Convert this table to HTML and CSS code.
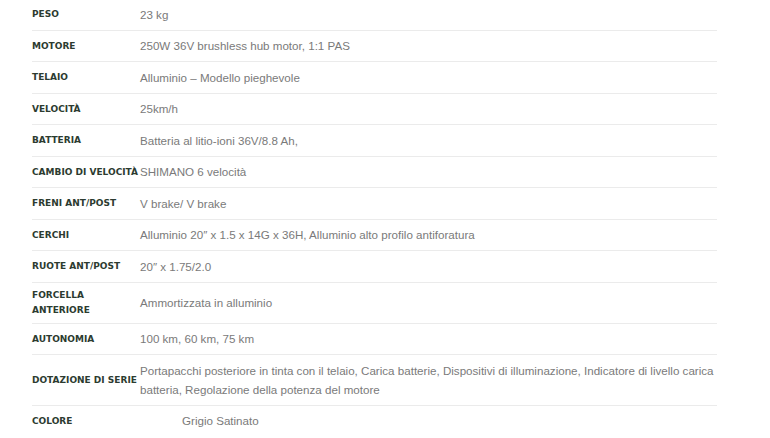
FILE: index.html
```html
<!DOCTYPE html>
<html lang="it">
<head>
  <meta charset="UTF-8" />
  <meta name="viewport" content="width=device-width, initial-scale=1.0"/>
  <title>Scheda tecnica</title>
  <link rel="stylesheet" href="styles.css">
</head>
<body>
  <table class="specs">
    <tr><th>Peso</th><td>23 kg</td></tr>
    <tr><th>Motore</th><td>250W 36V brushless hub motor, 1:1 PAS</td></tr>
    <tr><th>Telaio</th><td>Alluminio – Modello pieghevole</td></tr>
    <tr><th>Velocità</th><td>25km/h</td></tr>
    <tr><th>Batteria</th><td>Batteria al litio-ioni 36V/8.8 Ah,</td></tr>
    <tr><th>Cambio di velocità</th><td>SHIMANO 6 velocità</td></tr>
    <tr><th>Freni ant/post</th><td>V brake/ V brake</td></tr>
    <tr><th>Cerchi</th><td>Alluminio 20″ x 1.5 x 14G x 36H, Alluminio alto profilo antiforatura</td></tr>
    <tr><th>Ruote ant/post</th><td>20″ x 1.75/2.0</td></tr>
    <tr><th>Forcella anteriore</th><td>Ammortizzata in alluminio</td></tr>
    <tr><th>Autonomia</th><td>100 km, 60 km, 75 km</td></tr>
    <tr><th>Dotazione di serie</th><td>Portapacchi posteriore in tinta con il telaio, Carica batterie, Dispositivi di illuminazione, Indicatore di livello carica batteria, Regolazione della potenza del motore</td></tr>
    <tr><th>Colore</th><td><span class="indent">Grigio Satinato</span></td></tr>
  </table>
</body>
</html>
```

FILE: styles.css
```css
:root {
  --label: #2c3b30;
  --testo: #7a7a7a;
  --linea: #ebebeb;
}

* {
  box-sizing: border-box;
}

body {
  margin: 0;
  background-color: #fff;
}

.specs {
  margin: -1px 0 0 32px;
  width: 685px;
  border-collapse: collapse;
}

.specs tr + tr {
  border-top: 1px solid var(--linea);
}

.specs th {
  width: 108px;
  padding: 5.5px 0 4.5px;
  text-align: left;
  vertical-align: middle;
  font-family: 'DejaVu Sans', sans-serif;
  font-size: 9px;
  font-weight: bold;
  line-height: 15px;
  text-transform: uppercase;
  color: var(--label);
}

.specs td {
  padding: 5.75px 0;
  vertical-align: middle;
  font-family: 'Liberation Sans', Arial, sans-serif;
  font-size: 11.6px;
  line-height: 19px;
  color: var(--testo);
}

.indent {
  padding-left: 42px;
}
```
